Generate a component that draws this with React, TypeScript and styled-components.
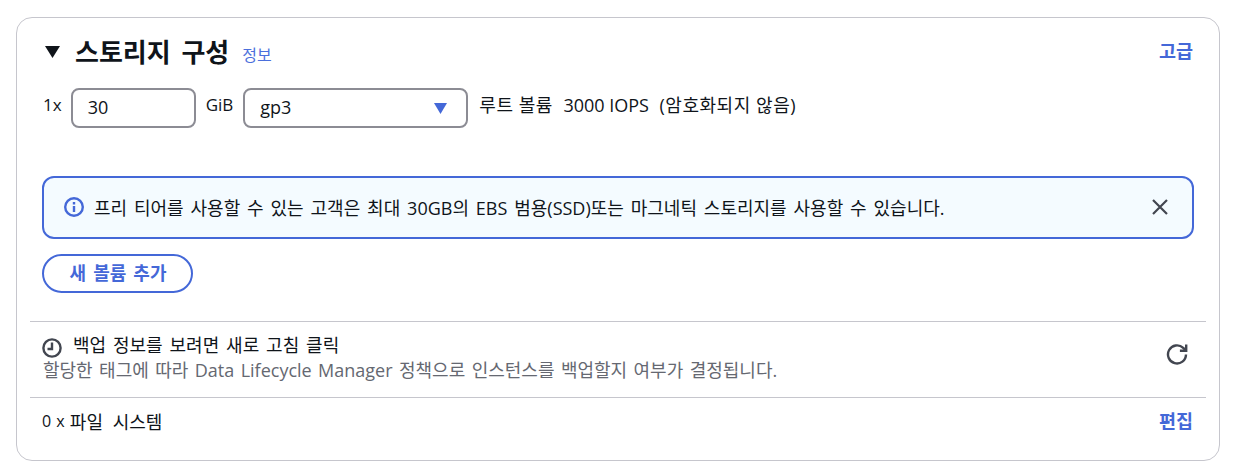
import React from "react";
import styled, { createGlobalStyle } from "styled-components";

const Global = createGlobalStyle`
  html, body { margin: 0; padding: 0; background: #fff; }
  body { font-family: "Open Sans", "Noto Sans CJK KR", sans-serif; font-size: 18px; color: #0f141a; word-spacing: 2.2px; }
  * { box-sizing: border-box; }
`;

const Page = styled.div`
  width: 1241px;
  height: 473px;
  padding: 17px 20px 12px 16px;
`;

const Card = styled.section`
  width: 1204px;
  height: 444px;
  border: 1px solid #c6c6cd;
  border-radius: 16px;
  display: flex;
  flex-direction: column;
  padding: 0 13px 0 13px;
`;

const Header = styled.header`
  display: flex;
  align-items: center;
  height: 39px;
  margin-top: 14px;
  padding: 0 13px 0 15px;
`;

const Caret = styled.svg`
  width: 15px;
  height: 12px;
  margin-right: 15px;
  fill: #0f141a;
`;

const Title = styled.h2`
  margin: 0;
  font-size: 26px;
  line-height: 34px;
  font-weight: 700;
  word-spacing: 4px;
`;

const InfoLink = styled.a`
  margin-left: 13px;
  margin-top: 4px;
  font-size: 16px;
  color: #4b6fdc;
`;

const ActionLink = styled.a`
  margin-left: auto;
  margin-top: -3px;
  font-size: 18.5px;
  font-weight: 700;
  color: #4468d8;
`;

const VolumeRow = styled.div`
  display: flex;
  align-items: flex-start;
  height: 40px;
  margin-top: 17px;
  padding-left: 13px;
`;

const Label = styled.span<{ $left: number }>`
  margin-left: ${(p) => p.$left}px;
  margin-top: 4px;
  line-height: 26px;
  white-space: pre;
  font-size: 17px;
`;

const KoreanLabel = styled(Label)`
  font-size: 18px;
  letter-spacing: 0.55px;
  word-spacing: 0;
`;

const PlainRun = styled.span`
  letter-spacing: 0;
`;

const FieldBox = styled.div<{ $width: number; $pad: number; $left: number }>`
  width: ${(p) => p.$width}px;
  height: 40px;
  border: 2px solid #8c8c94;
  border-radius: 8px;
  display: flex;
  align-items: center;
  justify-content: space-between;
  margin-left: ${(p) => p.$left}px;
  padding: 0 19px 2px ${(p) => p.$pad}px;
  font-size: 18px;
`;

const Arrow = styled.svg`
  width: 13px;
  height: 11px;
  margin-top: 2px;
  fill: #4468d8;
`;

const Alert = styled.div`
  display: flex;
  align-items: center;
  height: 63px;
  margin: 48px 12px 0 12px;
  padding: 0 23px 2px 20px;
  border: 2px solid #4468d8;
  border-radius: 12px;
  background: #f4fbff;
`;

const AlertText = styled.span`
  margin-left: 10px;
`;

const Dismiss = styled.svg`
  width: 18px;
  height: 18px;
  margin-left: auto;
  stroke: #424650;
  stroke-width: 2.2;
  fill: none;
`;

const AddButton = styled.button`
  align-self: flex-start;
  width: 151px;
  height: 39px;
  margin: 15px 0 0 12px;
  padding: 0 0 3px 1px;
  background: #fff;
  border: 2px solid #4468d8;
  border-radius: 20px;
  color: #4468d8;
  font: 700 18px "Open Sans", "Noto Sans CJK KR", sans-serif;
  word-spacing: 2.4px;
`;

const Divider = styled.hr<{ $top: number }>`
  width: 100%;
  border: 0;
  border-top: 1px solid #c6c6cd;
  margin: ${(p) => p.$top}px 0 0;
`;

const BackupRow = styled.div`
  display: flex;
  align-items: center;
  height: 75px;
  padding: 0 16px 0 13px;
`;

const BackupCopy = styled.div`
  display: flex;
  flex-direction: column;
  margin-top: -4px;
`;

const BackupTitle = styled.div`
  display: flex;
  align-items: center;
  line-height: 25px;
  white-space: pre;
`;

const Clock = styled.svg`
  width: 20px;
  height: 20px;
  margin-left: -1px;
  margin-right: 11px;
  margin-top: 5px;
  fill: none;
  stroke: #424650;
  stroke-width: 2.4;
`;

const BackupHint = styled.div`
  color: #656871;
  line-height: 25px;
  word-spacing: 1.75px;
`;

const Refresh = styled.svg`
  width: 22px;
  height: 22px;
  margin-left: auto;
  margin-right: 2px;
  margin-top: -11px;
  fill: none;
  stroke: #424650;
  stroke-width: 2.4;
`;

const FileRow = styled.div`
  display: flex;
  align-items: center;
  height: 46px;
  padding: 0 13px 0 12px;
  white-space: pre;
  word-spacing: 5px;
`;

const CountPrefix = styled.span`
  font-size: 16px;
  word-spacing: 1px;
`;

export default function App() {
  return (
    <Page>
      <Global />
      <Card>
        <Header>
          <Caret viewBox="0 0 15 12"><path d="M0 0h15L7.5 12z" /></Caret>
          <Title>스토리지 구성</Title>
          <InfoLink>정보</InfoLink>
          <ActionLink>고급</ActionLink>
        </Header>
        <VolumeRow>
          <Label $left={0}>1x</Label>
          <FieldBox $width={125} $pad={15} $left={9}>30</FieldBox>
          <Label $left={10}>GiB</Label>
          <FieldBox $width={225} $pad={15} $left={10}>
            gp3
            <Arrow viewBox="0 0 13 11"><path d="M0 0h13L6.5 11z" /></Arrow>
          </FieldBox>
          <KoreanLabel $left={11}>루트 볼륨  <PlainRun>3000 IOPS</PlainRun>  (암호화되지 않음)</KoreanLabel>
        </VolumeRow>
        <Alert>
          <svg width="20" height="20" viewBox="0 0 20 20" fill="none" stroke="#4468d8" strokeWidth="2.4">
            <circle cx="10" cy="10" r="8.8" />
            <path d="M10 9v6M10 5v2.4" />
          </svg>
          <AlertText>프리 티어를 사용할 수 있는 고객은 최대 30GB의 EBS 범용(SSD)또는 마그네틱 스토리지를 사용할 수 있습니다.</AlertText>
          <Dismiss viewBox="0 0 18 18"><path d="M2 2l14 14M16 2L2 16" /></Dismiss>
        </Alert>
        <AddButton>새 볼륨 추가</AddButton>
        <Divider $top={28} />
        <BackupRow>
          <BackupCopy>
            <BackupTitle>
              <Clock viewBox="0 0 20 20">
                <circle cx="10" cy="10" r="8.6" />
                <path d="M10 4.5v6.5H5.5" />
              </Clock>
              백업 정보를 보려면 새로 고침 클릭
            </BackupTitle>
            <BackupHint>할당한 태그에 따라 Data Lifecycle Manager 정책으로 인스턴스를 백업할지 여부가 결정됩니다.</BackupHint>
          </BackupCopy>
          <Refresh viewBox="0 0 22 22">
            <path d="M20 11.5a9 9 0 1 1-2.8-6.6L19.5 7" />
            <path d="M20.2 1.5v6.3h-6.3" />
          </Refresh>
        </BackupRow>
        <Divider $top={0} />
        <FileRow>
          <CountPrefix>0 x </CountPrefix>파일 시스템
          <ActionLink>편집</ActionLink>
        </FileRow>
      </Card>
    </Page>
  );
}
